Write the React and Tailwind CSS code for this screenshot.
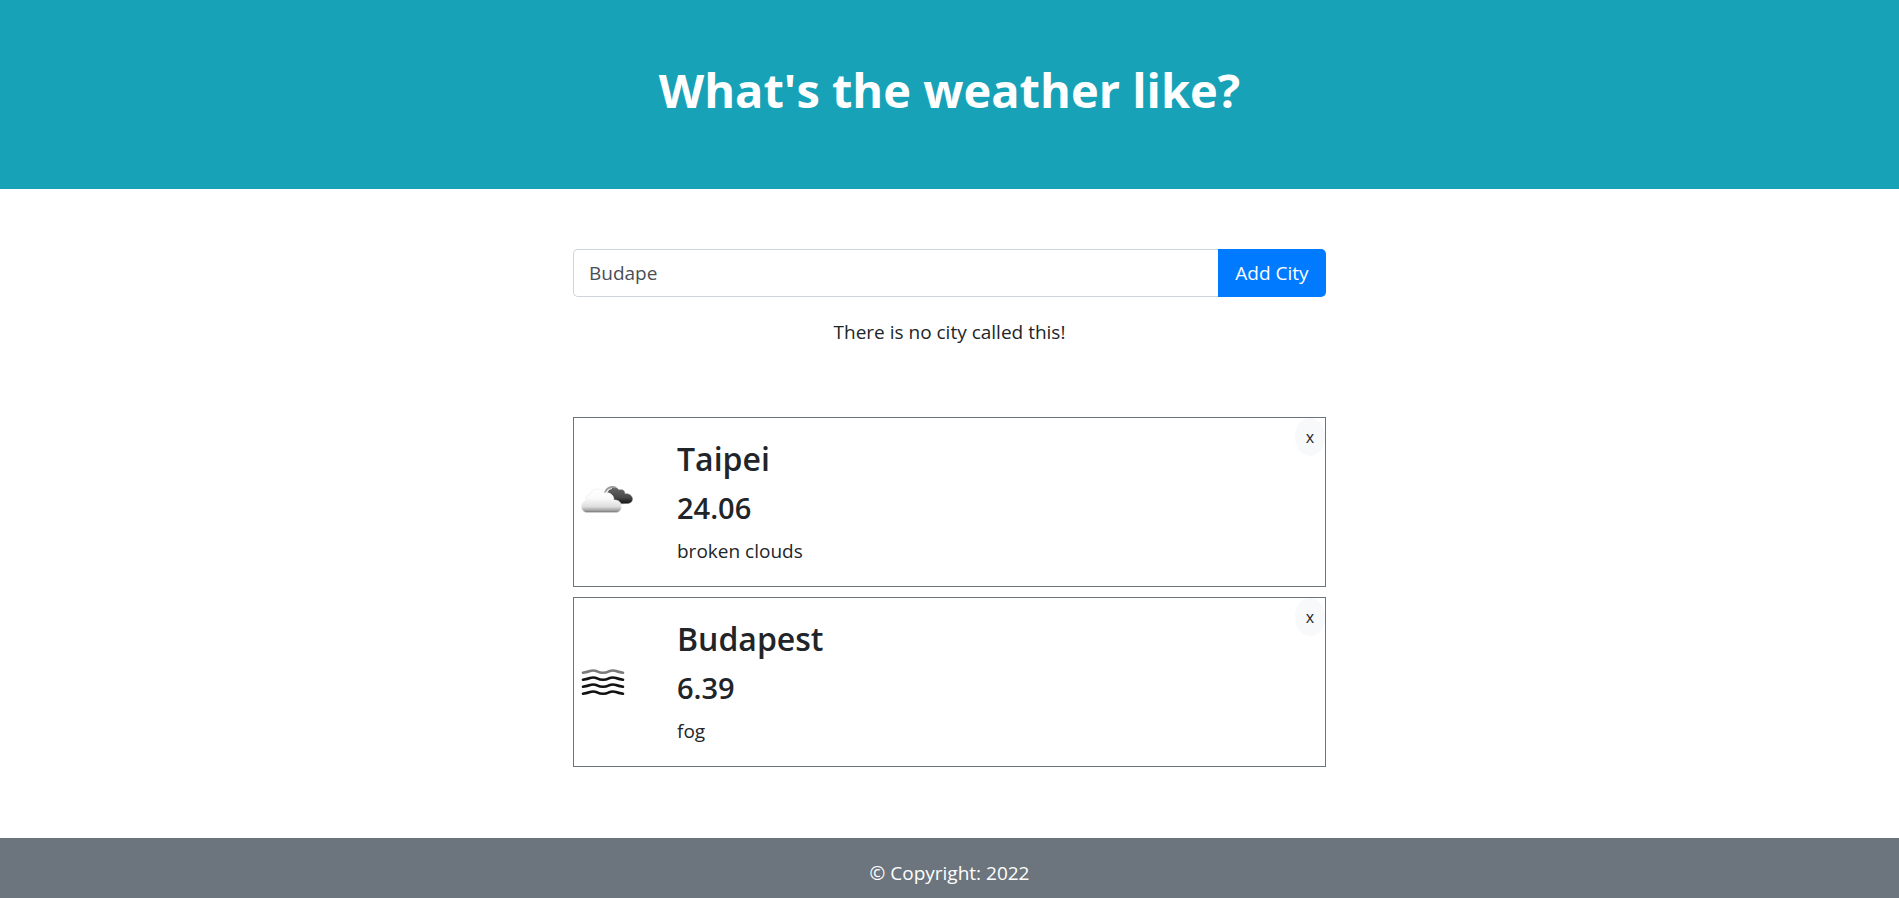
import { useState } from 'react'

function CloudsIcon() {
  return (
    <svg viewBox="0 2 56 32" className="h-8 w-14" role="img" aria-label="broken clouds">
      <defs>
        <linearGradient id="cloud-light" x1="0" y1="0" x2="0" y2="1">
          <stop offset="0" stopColor="#ffffff" />
          <stop offset="0.4" stopColor="#fafafa" />
          <stop offset="0.75" stopColor="#dedede" />
          <stop offset="0.92" stopColor="#a0a0a0" />
          <stop offset="1" stopColor="#6c6c6c" />
        </linearGradient>
        <linearGradient id="cloud-dark" x1="0" y1="0" x2="0" y2="1">
          <stop offset="0" stopColor="#666666" />
          <stop offset="0.6" stopColor="#484848" />
          <stop offset="1" stopColor="#101010" />
        </linearGradient>
      </defs>
      <path
        d="M30 20C25 15 25 10 28 6C31 2.500 36 2.500 38 6C41 5 44 6 44 10C48 9 51.500 12 51.500 15C51.500 18 49 19.500 46 19.500L30 20Z"
        fill="url(#cloud-dark)"
        stroke="#777777"
        strokeWidth="0.5"
      />
      <path d="M23.500 10C25 4.500 29 2 35 3.500" fill="none" stroke="#999999" strokeWidth="1.800" />
      <path d="M24.500 11C26 6.500 28.500 5 31 4.500" fill="none" stroke="#eeeeee" strokeWidth="0.900" />
      <path
        d="M6 28.500C3 28.500 0.500 26 0.500 22.500C0.500 19 2.500 17.500 5 17C4 13 6 10.500 9 10.500C10 7 13 4.800 17 5C20 5 22 6.500 23 9C28 7.500 33 10.500 33 16C37 15.500 41 18.500 40 22C41 26 38 28.500 35 28.500Z"
        fill="url(#cloud-light)"
        stroke="#e4e4e4"
        strokeWidth="0.5"
      />
    </svg>
  )
}

function FogIcon() {
  const wave = 'q5 -1 7 -1.800q3.500 -1.200 7 0.300q6 3 12 0q3.500 -1.500 7 -0.300q2 0.800 7 1.800'
  return (
    <svg viewBox="0 1 56 32" className="h-8 w-14" role="img" aria-label="fog">
      <g fill="none" stroke="#111111" strokeWidth="2.600" strokeLinecap="round">
        <path d={'M2 7.800' + wave} stroke="#7a7a7a" />
        <path d={'M2 14.800' + wave} />
        <path d={'M2 21.800' + wave} />
        <path d={'M2 28.800' + wave} />
      </g>
    </svg>
  )
}

function CityCard({ city, onRemove }) {
  const Icon = city.icon
  return (
    <li className="relative flex items-center border border-[#6c757d] py-5 pl-[7px]">
      <div className="w-24 shrink-0">
        <Icon />
      </div>
      <div>
        <h2 className="mb-2.5 text-[32px] leading-[42px] font-semibold">{city.name}</h2>
        <h3 className="mb-2.5 text-[29px] leading-9 font-semibold">{city.temperature}</h3>
        <p className="text-[19px] leading-[30px]">{city.description}</p>
      </div>
      <button
        type="button"
        aria-label={'Remove ' + city.name}
        onClick={onRemove}
        className="absolute top-0 right-0 h-[38px] w-[30px] rounded-[50%] bg-[#f8f9fa] text-base"
      >
        x
      </button>
    </li>
  )
}

export default function App() {
  const [query, setQuery] = useState('Budape')
  const [cities, setCities] = useState([
    { name: 'Taipei', temperature: '24.06', description: 'broken clouds', icon: CloudsIcon },
    { name: 'Budapest', temperature: '6.39', description: 'fog', icon: FogIcon },
  ])

  return (
    <div className="flex min-h-screen flex-col bg-white font-['Open_Sans','Noto_Sans',sans-serif] text-[19px] leading-[30px] text-[#212529]">
      <header className="bg-[#17a2b8] px-5 pt-[60px] pb-[69px] text-center text-white">
        <h1 className="text-[47px] leading-[60px] font-bold">What's the weather like?</h1>
      </header>
      <main className="mx-auto w-full max-w-[753px] pt-[60px] pb-[70px]">
        <form className="flex h-12" onSubmit={(e) => e.preventDefault()}>
          <input
            type="text"
            aria-label="City"
            value={query}
            onChange={(e) => setQuery(e.target.value)}
            className="min-w-0 flex-1 rounded-l-[5px] border border-r-0 border-[#ced4da] px-[15px] text-[#495057]"
          />
          <button type="submit" className="w-[108px] rounded-r-[5px] bg-[#007bff] text-white">
            Add City
          </button>
        </form>
        <p className="mt-5 text-center">There is no city called this!</p>
        <ul className="mt-[70px] flex flex-col gap-2.5">
          {cities.map((city) => (
            <CityCard
              key={city.name}
              city={city}
              onRemove={() => setCities(cities.filter((c) => c !== city))}
            />
          ))}
        </ul>
      </main>
      <footer className="mt-auto bg-[#6c757d] pt-5 pb-2.5 text-center text-white">© Copyright: 2022</footer>
    </div>
  )
}
